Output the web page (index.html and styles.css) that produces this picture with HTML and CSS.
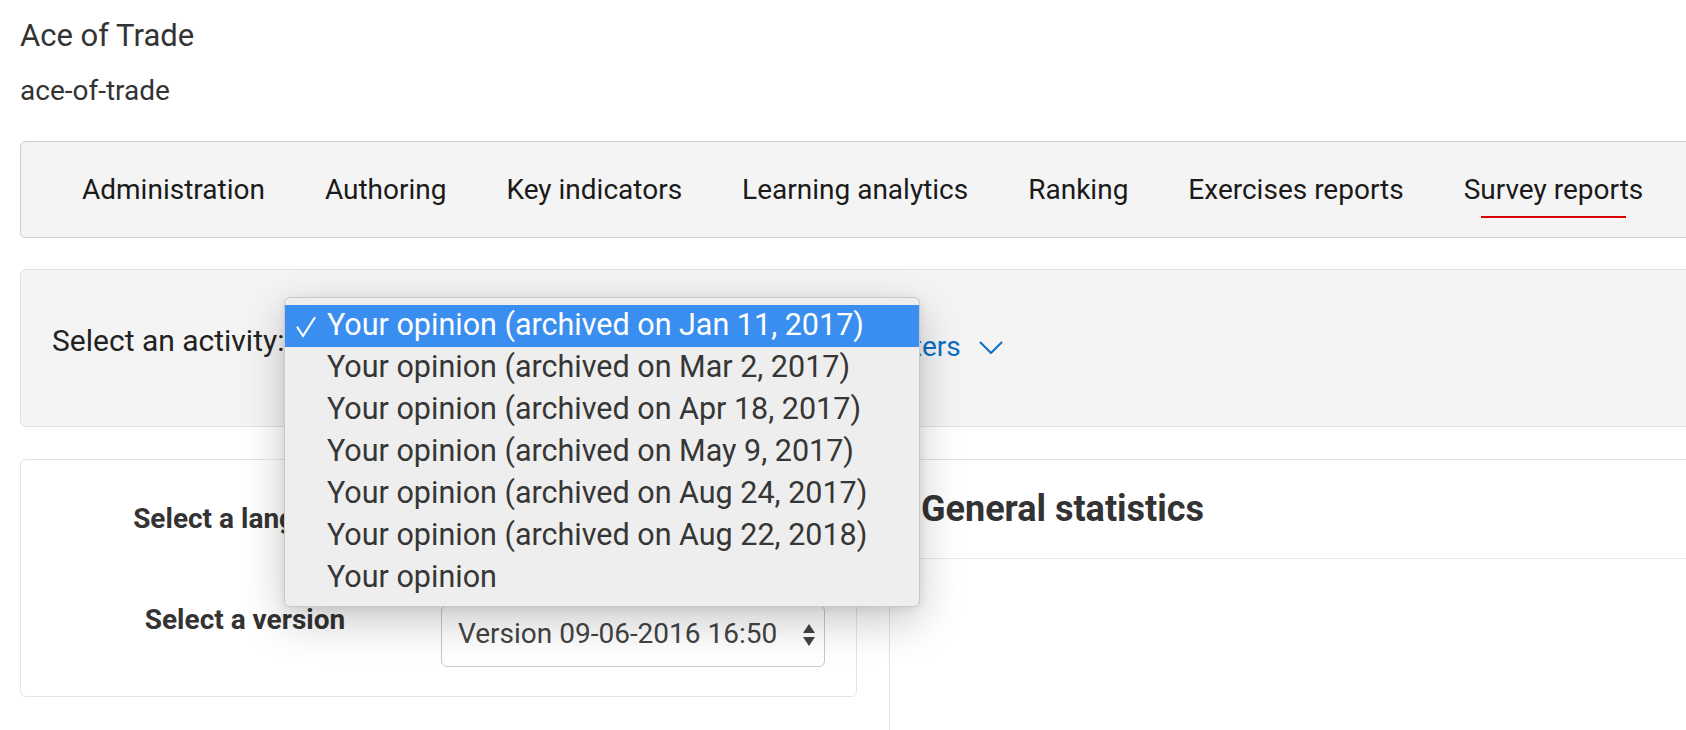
FILE: index.html
```html
<!DOCTYPE html>
<html lang="en">
<head>
<meta charset="utf-8">
<title>Ace of Trade - Survey reports</title>
<link rel="stylesheet" href="styles.css">
</head>
<body>
<div class="page">
  <header class="site-head">
    <h1 class="site-title">Ace of Trade</h1>
    <div class="site-slug">ace-of-trade</div>
  </header>

  <nav class="tabs">
    <a class="tab">Administration</a>
    <a class="tab">Authoring</a>
    <a class="tab">Key indicators</a>
    <a class="tab">Learning analytics</a>
    <a class="tab">Ranking</a>
    <a class="tab">Exercises reports</a>
    <a class="tab tab-active">Survey reports</a>
  </nav>

  <section class="filter-bar">
    <div class="filter-row">
      <span class="filter-label">Select an activity:</span>
      <div class="activity-select"></div>
      <a class="filter-toggle">Show filters
        <svg class="chevron" viewBox="0 0 24 14" width="24" height="14"><polyline points="1.5,1.5 12,12 22.5,1.5" fill="none" stroke="currentColor" stroke-width="2" stroke-linecap="round" stroke-linejoin="round"/></svg>
      </a>
    </div>

    <ul class="select-menu">
      <li class="menu-item menu-item-selected">
        <svg class="check" viewBox="0 0 20 22" width="20" height="22"><polyline points="1.5,11.5 7,20 18.5,2" fill="none" stroke="currentColor" stroke-width="2.2" stroke-linecap="round" stroke-linejoin="round"/></svg>
        Your opinion (archived on Jan 11, 2017)
      </li>
      <li class="menu-item">Your opinion (archived on Mar 2, 2017)</li>
      <li class="menu-item">Your opinion (archived on Apr 18, 2017)</li>
      <li class="menu-item">Your opinion (archived on May 9, 2017)</li>
      <li class="menu-item">Your opinion (archived on Aug 24, 2017)</li>
      <li class="menu-item">Your opinion (archived on Aug 22, 2018)</li>
      <li class="menu-item">Your opinion</li>
    </ul>
  </section>

  <div class="report">
    <div class="options-card">
      <div class="option-row">
        <span class="option-label">Select a language</span>
        <div class="fake-select">
          <span class="fake-select-value"></span>
          <svg class="updown" viewBox="0 0 14 24" width="14" height="24"><polygon points="7,0 13,9 1,9" fill="currentColor"/><polygon points="1,13 13,13 7,22" fill="currentColor"/></svg>
        </div>
      </div>
      <div class="option-row">
        <span class="option-label">Select a version</span>
        <div class="fake-select">
          <span class="fake-select-value">Version 09-06-2016 16:50</span>
          <svg class="updown" viewBox="0 0 14 24" width="14" height="24"><polygon points="7,0 13,9 1,9" fill="currentColor"/><polygon points="1,13 13,13 7,22" fill="currentColor"/></svg>
        </div>
      </div>
    </div>

    <div class="stats-panel">
      <div class="stats-head">
        <h2 class="stats-title">General statistics</h2>
      </div>
    </div>
  </div>
</div>
</body>
</html>
```

FILE: styles.css
```css
html, body {
  margin: 0;
  padding: 0;
  background: #ffffff;
  overflow: hidden;
}

body {
  font-family: Roboto, "Liberation Sans", Arial, sans-serif;
  color: #222;
}

.page {
  width: 1720px;
  padding-left: 20px;
}

.site-head {
  padding-top: 18px;
}

.site-title {
  margin: 0;
  font-size: 31px;
  line-height: 36px;
  font-weight: 400;
  color: #333;
}

.site-slug {
  margin-top: 20px;
  font-size: 28px;
  line-height: 33px;
  color: #333;
}

/* ---------- tabs ---------- */
.tabs {
  margin-top: 34px;
  display: flex;
  gap: 60px;
  padding: 31px 0 19px 61px;
  background: #f4f4f4;
  border: 1px solid #cfcfcf;
  border-radius: 5px;
}

.tab {
  display: block;
  font-size: 28px;
  line-height: 34px;
  color: #1a1a1a;
  text-decoration: none;
  white-space: nowrap;
}

.tab::after {
  content: "";
  display: block;
  height: 2px;
  margin: 9px 17px 0;
  background: transparent;
}

.tab-active::after {
  background: #d90000;
}

/* ---------- filter bar ---------- */
.filter-bar {
  position: relative;
  margin-top: 31px;
  height: 158px;
  box-sizing: border-box;
  padding: 53px 31px 0;
  background: #f4f4f4;
  border: 1px solid #e2e2e2;
  border-radius: 6px;
}

.filter-row {
  display: flex;
  align-items: flex-start;
}

.filter-label {
  font-size: 30px;
  line-height: 36px;
  color: #222;
  white-space: nowrap;
}

.activity-select {
  width: 530px;
  height: 36px;
}

.filter-toggle {
  display: flex;
  align-items: center;
  gap: 18px;
  margin-top: 7px;
  font-size: 28px;
  line-height: 34px;
  color: #0b6fc4;
  text-decoration: none;
  white-space: nowrap;
}

.chevron {
  display: block;
  margin-top: 2px;
}

/* ---------- native-like popup menu ---------- */
.select-menu {
  position: absolute;
  left: 263px;
  top: 27px;
  z-index: 10;
  width: 634px;
  margin: 0;
  padding: 7px 0 7px;
  list-style: none;
  background: #eeeeee;
  border: 1px solid #c9c9c9;
  border-radius: 6px;
  box-shadow: 0 14px 44px rgba(0, 0, 0, 0.22), 0 2px 8px rgba(0, 0, 0, 0.08);
  overflow: hidden;
}

.menu-item {
  position: relative;
  height: 42px;
  box-sizing: border-box;
  padding: 0 0 3px 42px;
  font-size: 30.5px;
  line-height: 39px;
  color: #363636;
  white-space: nowrap;
}

.menu-item-selected {
  background: #3a8ef0;
  color: #ffffff;
}

.check {
  position: absolute;
  left: 11px;
  top: 11px;
}

/* ---------- report area ---------- */
.report {
  margin-top: 32px;
  display: flex;
  align-items: flex-start;
  gap: 32px;
}

.options-card {
  flex: 0 0 837px;
  height: 238px;
  box-sizing: border-box;
  padding: 42px 31px 31px 28px;
  border: 1px solid #e4e4e4;
  border-radius: 6px;
  background: #fff;
  display: flex;
  flex-direction: column;
  gap: 37px;
}

.option-row {
  display: grid;
  grid-template-columns: 392px 384px;
  align-items: start;
}

.option-label {
  font-size: 28px;
  line-height: 34px;
  font-weight: 700;
  color: #333;
  text-align: center;
  white-space: nowrap;
}

.fake-select {
  margin-top: 2px;
  height: 62px;
  box-sizing: border-box;
  display: flex;
  align-items: center;
  justify-content: space-between;
  padding: 0 8px 5px 16px;
  border: 1px solid #c8c8c8;
  border-radius: 6px;
  background: #fff;
  font-size: 28px;
  line-height: 34px;
  color: #444;
}

.updown {
  display: block;
  color: #444;
  margin-top: 5px;
}

.stats-panel {
  flex: 1;
  min-height: 300px;
  border-left: 1px solid #e2e2e2;
  border-top: 1px solid #e2e2e2;
}

.stats-head {
  padding: 28px 31px;
  border-bottom: 1px solid #e6e6e6;
}

.stats-title {
  margin: 0;
  font-size: 36px;
  line-height: 42px;
  font-weight: 700;
  color: #333;
}
```
